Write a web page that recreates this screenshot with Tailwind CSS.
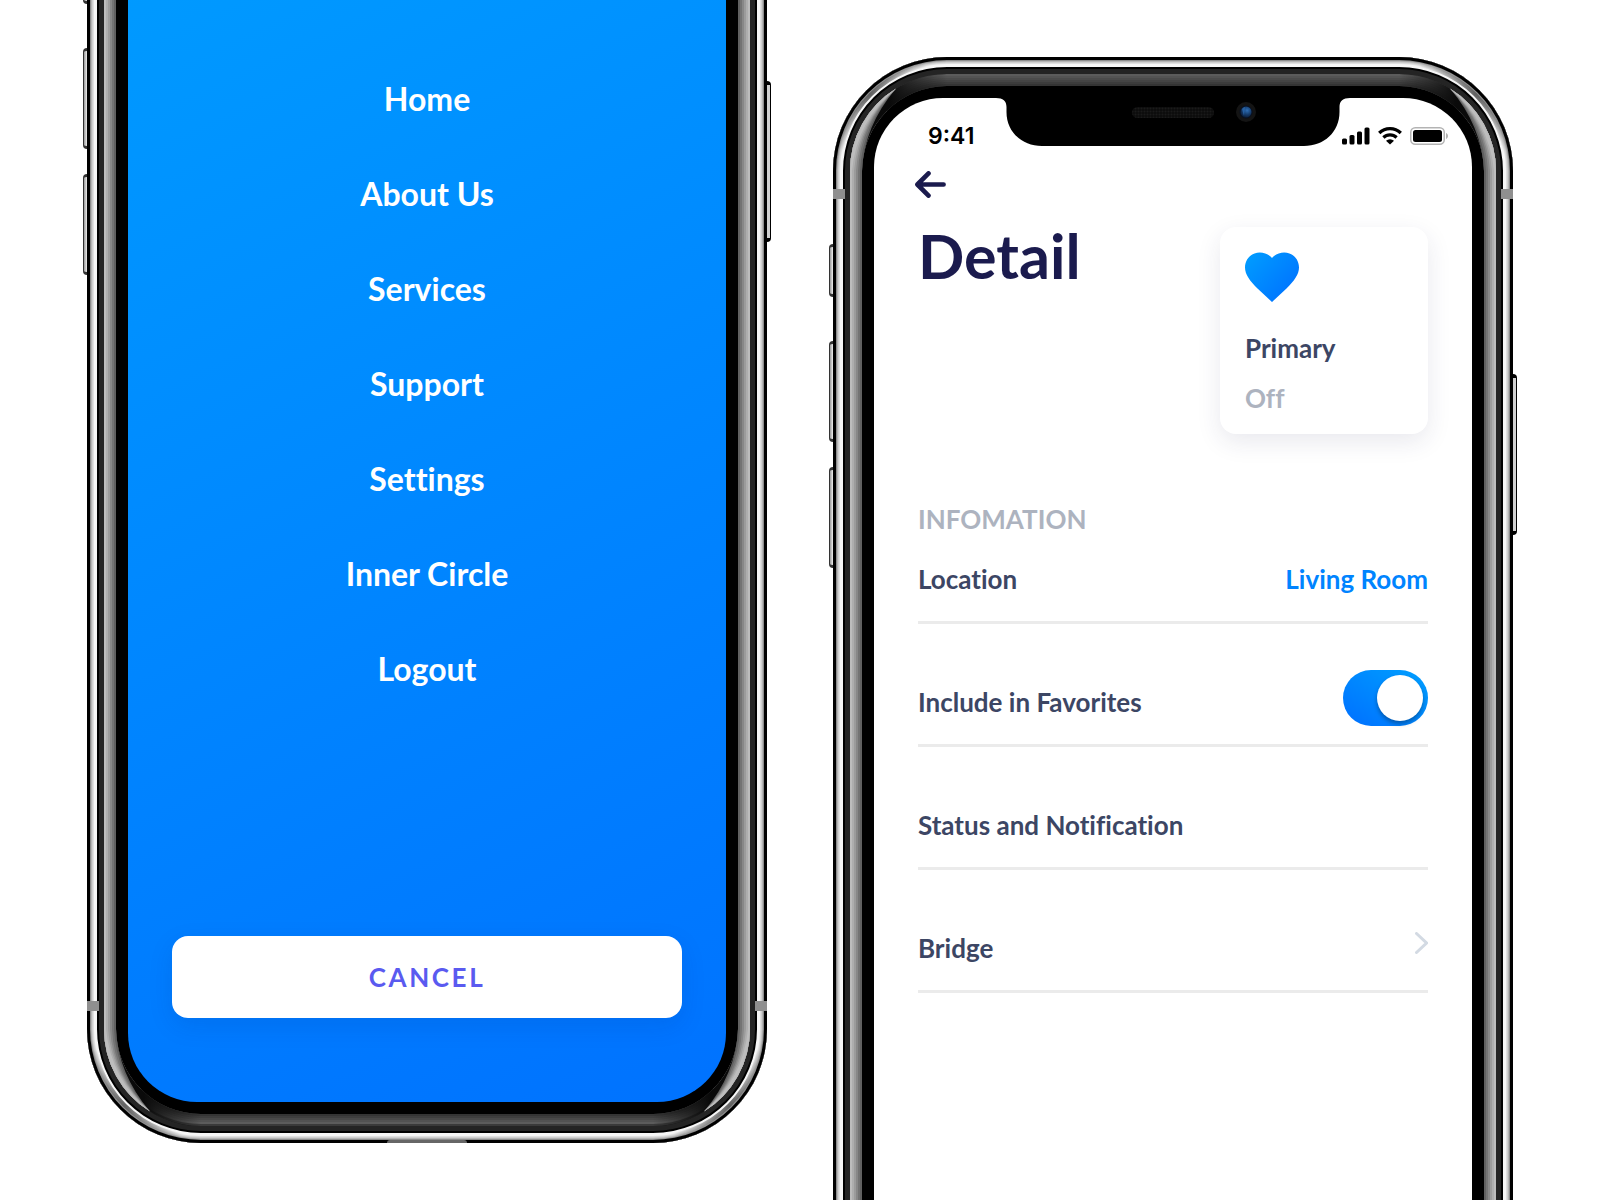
<!DOCTYPE html>
<html lang="en">
<head>
    <meta charset="UTF-8">
    <meta name="viewport" content="width=device-width, initial-scale=1.0">
    <title>Smart Home - Menu and Detail</title>
    <script src="https://cdn.jsdelivr.net/npm/@tailwindcss/browser@4"></script>
</head>
<body class="bg-white font-['Lato',sans-serif] font-bold [font-variant-ligatures:no-common-ligatures]">

    <!-- Corner reflections of the frame, drawn for the top left corner -->
    <svg class="absolute size-0" aria-hidden="true">
        <defs>
            <linearGradient id="fade" gradientUnits="userSpaceOnUse" x1="40" y1="0" x2="97" y2="0">
                <stop offset="0" stop-color="#0a0a0a"/>
                <stop offset="1" stop-color="#0a0a0a" stop-opacity="0"/>
            </linearGradient>
            <linearGradient id="rim" gradientUnits="userSpaceOnUse" x1="2" y1="90" x2="90" y2="2">
                <stop offset="0" stop-color="#555" stop-opacity="0"/>
                <stop offset="0.5" stop-color="#555" stop-opacity="0.9"/>
                <stop offset="1" stop-color="#555" stop-opacity="0"/>
            </linearGradient>
        </defs>
        <symbol id="corner" viewBox="0 0 114 114">
            <path d="M6 114A108 108 0 0 1 114 6" fill="none" stroke="url(#rim)" stroke-width="4"/>
            <g transform="translate(17 17)">
                <path d="M0 97A97 97 0 0 1 97 0V12A85 85 0 0 0 12 97Z" fill="url(#fade)"/>
                <path d="M0 97A97 97 0 0 1 46 14.500Q14 52 12 97Z" fill="#606060"/>
                <path d="M0 97A97 97 0 0 1 46 14.500Q12 51 10 97Z" fill="#747474"/>
                <path d="M0 97A97 97 0 0 1 46 14.500Q10 50 8 97Z" fill="#888888"/>
                <path d="M0 97A97 97 0 0 1 46 14.500Q9 49 6 97Z" fill="#9c9c9c"/>
                <path d="M0 97A97 97 0 0 1 46 14.500Q8 48 4 97Z" fill="#aeaeae"/>
                <path d="M0 97A97 97 0 0 1 46 14.500Q7 46 2 97Z" fill="#bdbdbd"/>
            </g>
        </symbol>
    </svg>

    <main class="flex h-screen items-start justify-center gap-[66px] overflow-hidden px-[86px]">

        <!-- Menu phone -->
        <section class="relative -mt-[236px] flex min-h-[1379px] max-w-[680px] flex-1 shrink-0 flex-col">
            <!-- Side buttons -->
            <div class="absolute -left-1 top-[187px] h-[53px] w-2 rounded-l-sm border-y-3 border-l border-[#333] bg-linear-to-r from-[#999] via-white to-[#999]"></div>
            <div class="absolute -left-1 top-[284px] h-[101px] w-2 rounded-l-sm border-y-3 border-l border-[#333] bg-linear-to-r from-[#999] via-white to-[#999]"></div>
            <div class="absolute -left-1 top-[410px] h-[101px] w-2 rounded-l-sm border-y-3 border-l border-[#333] bg-linear-to-r from-[#999] via-white to-[#999]"></div>
            <div class="absolute -right-1 top-[317px] h-[161px] w-2 rounded-r-sm border-y-4 border-r border-black bg-[#cfcfcf]"></div>

            <!-- Frame -->
            <div class="relative flex flex-1 flex-col rounded-[114px] bg-black p-[41px] shadow-[inset_0_0_0_3px_#000,inset_0_0_0_4px_#8c8c8c,inset_0_0_0_5px_#b4b4b4,inset_0_0_0_6px_#cfcfcf,inset_0_0_0_7px_#e0e0e0,inset_0_0_0_10px_#f6f6f6,inset_0_0_0_12px_#000,inset_0_0_0_17px_#242424]">
                <div class="absolute inset-[17px] rounded-[97px] border-4 border-x-[#bdbdbd] border-y-[#3a3a3a]"></div>
                <div class="absolute inset-[19px] rounded-[95px] border-4 border-x-[#aeaeae] border-y-[#5c5c5c]"></div>
                <div class="absolute inset-[21px] rounded-[93px] border-4 border-x-[#9c9c9c] border-y-[#525252]"></div>
                <div class="absolute inset-[23px] rounded-[91px] border-4 border-x-[#888888] border-y-[#484848]"></div>
                <div class="absolute inset-[25px] rounded-[89px] border-4 border-x-[#747474] border-y-[#3e3e3e]"></div>
                <div class="absolute inset-[27px] rounded-[87px] border-2 border-x-[#606060] border-y-[#343434]"></div>
                <svg class="absolute bottom-0 left-0 size-[114px] -scale-y-100" aria-hidden="true"><use href="#corner"/></svg>
                <svg class="absolute bottom-0 right-0 size-[114px] -scale-100" aria-hidden="true"><use href="#corner"/></svg>
                <div class="absolute bottom-[132px] left-0 h-[10px] w-3 bg-[#8f8f8f]"></div>
                <div class="absolute bottom-[132px] right-0 h-[10px] w-3 bg-[#8f8f8f]"></div>
                <div class="absolute bottom-0 left-1/2 h-[3px] w-20 -translate-x-1/2 rounded-t-full bg-[#666]"></div>

                <!-- Screen -->
                <div class="relative flex flex-1 flex-col rounded-[69px] bg-linear-[155deg] from-[#009fff] to-[#0072ff] px-11 pb-[84px] pt-[274px]">
                    <nav class="flex flex-col items-center gap-[55px] text-[32px] leading-10 text-white">
                        <a href="#home">Home</a>
                        <a href="#about">About Us</a>
                        <a href="#services">Services</a>
                        <a href="#support">Support</a>
                        <a href="#settings">Settings</a>
                        <a href="#inner-circle">Inner Circle</a>
                        <a href="#logout">Logout</a>
                    </nav>
                    <button type="button" class="mt-auto h-[82px] rounded-2xl bg-white text-[26px] tracking-widest text-[#5a5af0] shadow-[0_8px_24px_rgba(0,40,120,0.12)]">CANCEL</button>
                </div>
            </div>
        </section>

        <!-- Detail phone -->
        <section class="relative mt-[57px] flex min-h-[1379px] max-w-[680px] flex-1 shrink-0 flex-col">
            <!-- Side buttons -->
            <div class="absolute -left-1 top-[187px] h-[53px] w-2 rounded-l-sm border-y-3 border-l border-[#333] bg-linear-to-r from-[#999] via-white to-[#999]"></div>
            <div class="absolute -left-1 top-[284px] h-[101px] w-2 rounded-l-sm border-y-3 border-l border-[#333] bg-linear-to-r from-[#999] via-white to-[#999]"></div>
            <div class="absolute -left-1 top-[410px] h-[101px] w-2 rounded-l-sm border-y-3 border-l border-[#333] bg-linear-to-r from-[#999] via-white to-[#999]"></div>
            <div class="absolute -right-1 top-[317px] h-[161px] w-2 rounded-r-sm border-y-4 border-r border-black bg-[#cfcfcf]"></div>

            <!-- Frame -->
            <div class="relative flex flex-1 flex-col rounded-[114px] bg-black p-[41px] shadow-[inset_0_0_0_3px_#000,inset_0_0_0_4px_#8c8c8c,inset_0_0_0_5px_#b4b4b4,inset_0_0_0_6px_#cfcfcf,inset_0_0_0_7px_#e0e0e0,inset_0_0_0_10px_#f6f6f6,inset_0_0_0_12px_#000,inset_0_0_0_17px_#242424]">
                <div class="absolute inset-[17px] rounded-[97px] border-4 border-x-[#bdbdbd] border-y-[#5c5c5c]"></div>
                <div class="absolute inset-[19px] rounded-[95px] border-4 border-x-[#aeaeae] border-y-[#545454]"></div>
                <div class="absolute inset-[21px] rounded-[93px] border-4 border-x-[#9c9c9c] border-y-[#4c4c4c]"></div>
                <div class="absolute inset-[23px] rounded-[91px] border-4 border-x-[#888888] border-y-[#444444]"></div>
                <div class="absolute inset-[25px] rounded-[89px] border-4 border-x-[#747474] border-y-[#3c3c3c]"></div>
                <div class="absolute inset-[27px] rounded-[87px] border-2 border-x-[#606060] border-y-[#343434]"></div>
                <svg class="absolute left-0 top-0 size-[114px]" aria-hidden="true"><use href="#corner"/></svg>
                <svg class="absolute right-0 top-0 size-[114px] -scale-x-100" aria-hidden="true"><use href="#corner"/></svg>
                <div class="absolute left-0 top-[132px] h-[10px] w-3 bg-[#8f8f8f]"></div>
                <div class="absolute right-0 top-[132px] h-[10px] w-3 bg-[#8f8f8f]"></div>

                <!-- Screen -->
                <div class="relative flex flex-1 flex-col rounded-[69px] bg-white pt-[22px] text-[26px] leading-8 text-[#3c4664]">
                    <!-- Notch -->
                    <svg class="absolute left-1/2 top-0 -translate-x-1/2" width="354" height="48" viewBox="0 0 354 48" aria-hidden="true">
                        <defs>
                            <pattern id="mesh" width="3" height="3" patternUnits="userSpaceOnUse">
                                <rect width="3" height="3" fill="#0b0b0b"/>
                                <circle cx="1.5" cy="1.5" r="1" fill="#1a1a1a"/>
                            </pattern>
                            <radialGradient id="lens" cx="0.6" cy="0.35" r="0.7">
                                <stop offset="0" stop-color="#2f6fb5"/>
                                <stop offset="0.5" stop-color="#174072"/>
                                <stop offset="1" stop-color="#0a1a33"/>
                            </radialGradient>
                        </defs>
                        <path d="M0 -1V0C7 0 10.500 3 10.500 9V14C10.500 34 26 48 46 48H308C328 48 343.500 34 343.500 14V9C343.500 3 347 0 354 0V-1Z" fill="#000"/>
                        <rect x="136" y="9" width="82" height="11" rx="5.500" fill="url(#mesh)"/>
                        <circle cx="250" cy="14" r="10" fill="#141414"/>
                        <circle cx="250" cy="14" r="6.500" fill="#081020"/>
                        <circle cx="250" cy="14" r="5.500" fill="url(#lens)"/>
                        <path d="M246 11a5 5 0 0 1 3-2l-1 9z" fill="#2c6cb4" opacity=".7"/>
                    </svg>

                    <!-- Status bar -->
                    <div class="flex items-center justify-between pl-[54px] pr-6 text-black">
                        <span class="font-['Inter',sans-serif] text-[23px] font-semibold">9:41</span>
                        <div class="flex items-center gap-2">
                            <svg width="28" height="18" viewBox="0 0 28 18" aria-label="Signal">
                                <rect x="0" y="11.500" width="5" height="6" rx="1.500"/>
                                <rect x="7.500" y="8" width="5" height="9.500" rx="1.500"/>
                                <rect x="15" y="4.500" width="5" height="13" rx="1.500"/>
                                <rect x="22.500" y="0.500" width="5" height="17" rx="1.500"/>
                            </svg>
                            <svg width="24" height="18" viewBox="0 0 24 18" aria-label="Wi-Fi">
                                <path d="M1.200 6A15.600 15.600 0 0 1 22.800 6" fill="none" stroke="#000" stroke-width="3.300"/>
                                <path d="M5.400 10.500A9.500 9.500 0 0 1 18.600 10.500" fill="none" stroke="#000" stroke-width="3.200"/>
                                <path d="M12 17.500L8 13.700A6 6 0 0 1 16 13.700Z"/>
                            </svg>
                            <svg width="38" height="18" viewBox="0 0 38 18" aria-label="Battery">
                                <rect x="0.750" y="0.750" width="33.500" height="16.500" rx="4.500" fill="none" stroke="#b3b3b3" stroke-width="1.500"/>
                                <rect x="3" y="3" width="29" height="12" rx="2.500"/>
                                <path d="M36 6C37.300 6.500 38 7.600 38 9S37.300 11.500 36 12Z" fill="#b3b3b3"/>
                            </svg>
                        </div>
                    </div>

                    <a href="#back" aria-label="Back" class="mt-[19px] self-start pl-[41px]">
                        <svg width="31" height="27" viewBox="0 0 31 27" fill="none" stroke="#1b1b4e" stroke-width="4.600" stroke-linecap="round" stroke-linejoin="round">
                            <path d="M13.500 2.400L2.400 13.500L13.500 24.600M2.800 13.500H28.600"/>
                        </svg>
                    </a>

                    <div class="mt-[22px] flex items-start justify-between px-11">
                        <h1 class="text-[61px] leading-[72px] text-[#1b1b4e]">Detail</h1>
                        <div class="mt-[7px] w-[208px] rounded-2xl bg-white px-[25px] pb-5 pt-[25px] shadow-[0_8px_24px_rgba(40,40,90,0.10)]">
                            <svg width="54" height="51" viewBox="0 0 54 51" aria-hidden="true">
                                <defs>
                                    <linearGradient id="heart" x1="0" y1="0.150" x2="0.850" y2="0.850">
                                        <stop offset="0" stop-color="#009bff"/>
                                        <stop offset="1" stop-color="#0074ff"/>
                                    </linearGradient>
                                </defs>
                                <path d="M27 50L12.500 36.500C5 29 0 22.500 0 15.500C0 7 6.500 0.500 14.800 0.500C19.600 0.500 24.200 2.700 27 6C29.800 2.700 34.400 0.500 39.200 0.500C47.500 0.500 54 7 54 15.500C54 22.500 49 29 41.500 36.500Z" fill="url(#heart)"/>
                            </svg>
                            <p class="mt-[29px]">Primary</p>
                            <p class="mt-[18px] text-[#adb3bf]">Off</p>
                        </div>
                    </div>

                    <div class="mt-[69px] flex flex-col px-11">
                        <h2 class="text-[#adb3bf]">INFOMATION</h2>

                        <div class="mt-7 flex items-end justify-between border-b-3 border-[#ebebeb] pb-[18px]">
                            <span class="mb-2">Location</span>
                            <a href="#location" class="mb-2 text-[#0084ff]">Living Room</a>
                        </div>

                        <div class="flex h-[123px] items-end justify-between border-b-3 border-[#ebebeb] pb-[18px]">
                            <label for="favorites" class="mb-2">Include in Favorites</label>
                            <input id="favorites" type="checkbox" checked class="relative h-14 w-[85px] appearance-none rounded-full bg-linear-to-tr from-[#006fff] to-[#009fff] before:absolute before:left-[5px] before:top-[5px] before:size-[46px] before:rounded-full before:bg-white before:shadow-[0_3px_4px_rgba(0,0,0,0.3)] checked:before:left-[34px]">
                        </div>

                        <div class="flex h-[123px] items-end justify-between border-b-3 border-[#ebebeb] pb-[18px]">
                            <span class="mb-2">Status and Notification</span>
                        </div>

                        <a href="#bridge" class="flex h-[123px] items-end justify-between border-b-3 border-[#ebebeb] pb-[18px]">
                            <span class="mb-2">Bridge</span>
                            <svg class="mb-[18px]" width="13" height="22" viewBox="0 0 13 22" fill="none" stroke="#d3dae3" stroke-width="3" stroke-linecap="round" aria-hidden="true">
                                <path d="M1.500 1.500L11.500 11L1.500 20.500"/>
                            </svg>
                        </a>
                    </div>
                </div>
            </div>
        </section>

    </main>

</body>
</html>
